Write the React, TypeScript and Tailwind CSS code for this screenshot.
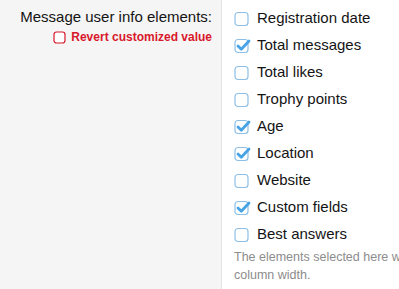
import React from 'react';

const items: { label: string; checked: boolean }[] = [
  { label: 'Registration date', checked: false },
  { label: 'Total messages', checked: true },
  { label: 'Total likes', checked: false },
  { label: 'Trophy points', checked: false },
  { label: 'Age', checked: true },
  { label: 'Location', checked: true },
  { label: 'Website', checked: false },
  { label: 'Custom fields', checked: true },
  { label: 'Best answers', checked: false },
];

function Box({ checked }: { checked: boolean }) {
  return (
    <svg width="18" height="18" viewBox="0 0 18 18" className="shrink-0">
      <rect x="1" y="2.5" width="13" height="13" rx="3" fill="#fff" stroke="#8dbfe6" strokeWidth="1.2" />
      {checked && (
        <path d="M4 9 L7.3 12.3 L15 4" fill="none" stroke="#47a3e6" strokeWidth="2.8" strokeLinecap="round" strokeLinejoin="round" />
      )}
    </svg>
  );
}

export default function App() {
  return (
    <div className="flex w-[399px] h-[289px] overflow-hidden bg-white" style={{ fontFamily: '"Liberation Sans", Arial, sans-serif' }}>
      <div className="w-[222px] shrink-0 bg-[#f5f5f5] border-r border-[#e4e4e4] flex flex-col items-end pr-[9px] pt-[7px]">
        <div className="text-[15px] leading-[20px] text-[#141414]">Message user info elements:</div>
        <label className="flex items-center gap-[5px] mt-[1px]">
          <svg width="13" height="13" viewBox="0 0 13 13">
            <rect x="1" y="1" width="11" height="11" rx="2.5" fill="#fff" stroke="#d8182b" strokeWidth="1.2" />
          </svg>
          <span className="text-[12px] leading-[18px] font-bold text-[#d8182b]">Revert customized value</span>
        </label>
      </div>
      <div className="flex flex-col pl-[12px] pt-[5px]">
        {items.map((it) => (
          <label key={it.label} className="flex items-center gap-[5px] h-[27px] text-[15px] text-[#141414] whitespace-nowrap">
            <Box checked={it.checked} />
            <span>{it.label}</span>
          </label>
        ))}
        <p className="mt-0 text-[12.5px] leading-[18px] text-[#8c8c8c] whitespace-nowrap">
          The elements selected here will
          <br />
          column width.
        </p>
      </div>
    </div>
  );
}
